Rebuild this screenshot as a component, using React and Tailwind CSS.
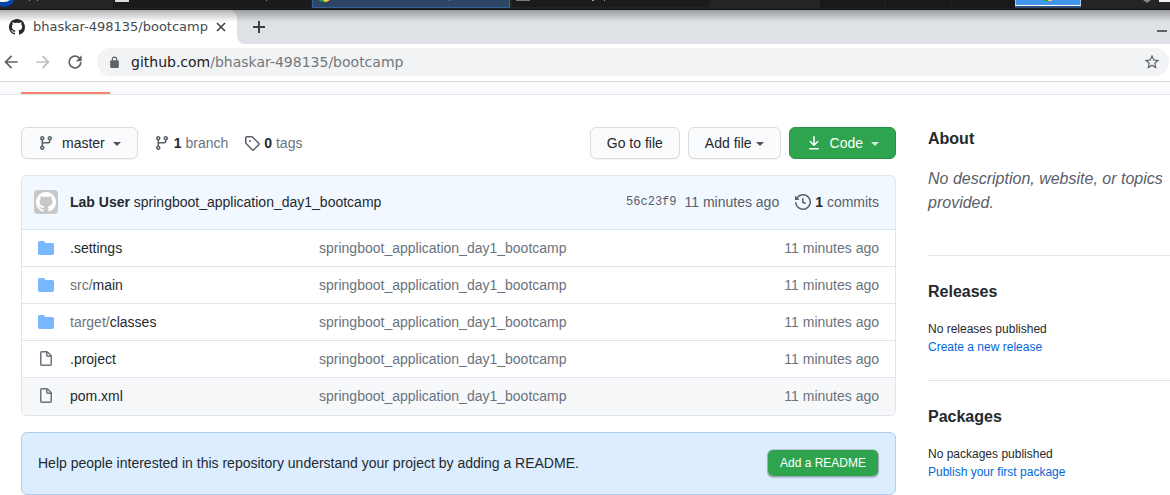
import React from 'react';

const MARK =
  'M8 0C3.58 0 0 3.58 0 8c0 3.54 2.29 6.53 5.47 7.59.4.07.55-.17.55-.38 0-.19-.01-.82-.01-1.49-2.01.37-2.53-.49-2.69-.94-.09-.23-.48-.94-.82-1.13-.28-.15-.68-.52-.01-.53.63-.01 1.08.58 1.23.82.72 1.21 1.87.87 2.33.66.07-.52.28-.87.51-1.07-1.78-.2-3.64-.89-3.64-3.95 0-.87.31-1.59.82-2.15-.08-.2-.36-1.02.08-2.12 0 0 .67-.21 2.2.82.64-.18 1.32-.27 2-.27.68 0 1.36.09 2 .27 1.53-1.04 2.2-.82 2.2-.82.44 1.1.16 1.92.08 2.12.51.56.82 1.27.82 2.15 0 3.07-1.87 3.75-3.65 3.95.29.25.54.73.54 1.48 0 1.07-.01 1.93-.01 2.2 0 .21.15.46.55.38A8.013 8.013 0 0016 8c0-4.42-3.58-8-8-8z';
const BRANCH =
  'M11.75 2.5a.75.75 0 100 1.5.75.75 0 000-1.5zm-2.25.75a2.25 2.25 0 113 2.122V6A2.5 2.5 0 0110 8.5H6a1 1 0 00-1 1v1.128a2.251 2.251 0 11-1.5 0V5.372a2.25 2.25 0 111.5 0v1.836A2.492 2.492 0 016 7h4a1 1 0 001-1v-.628A2.25 2.25 0 019.5 3.25zM4.25 12a.75.75 0 100 1.5.75.75 0 000-1.5zM3.5 3.25a.75.75 0 111.5 0 .75.75 0 01-1.5 0z';
const TAG =
  'M2.5 7.775V2.75a.25.25 0 01.25-.25h5.025a.25.25 0 01.177.073l6.25 6.25a.25.25 0 010 .354l-5.025 5.025a.25.25 0 01-.354 0l-6.25-6.25a.25.25 0 01-.073-.177zm-1.5 0V2.75C1 1.784 1.784 1 2.75 1h5.025c.464 0 .91.184 1.238.513l6.25 6.25a1.75 1.75 0 010 2.474l-5.026 5.026a1.75 1.75 0 01-2.474 0l-6.25-6.25A1.75 1.75 0 011 7.775zM6 5a1 1 0 100 2 1 1 0 000-2z';
const HISTORY =
  'M1.643 3.143L.427 1.927A.25.25 0 000 2.104V5.75c0 .138.112.25.25.25h3.646a.25.25 0 00.177-.427L2.715 4.215a6.5 6.5 0 11-1.18 4.458.75.75 0 10-1.493.154 8.001 8.001 0 101.6-5.684zM7.75 4a.75.75 0 01.75.75v2.992l2.028.812a.75.75 0 01-.557 1.392l-2.5-1A.75.75 0 017 8.25v-3.5A.75.75 0 017.75 4z';
const DOWNLOAD =
  'M7.47 10.78a.75.75 0 001.06 0l3.75-3.75a.75.75 0 00-1.06-1.06L8.75 8.439V1.75a.75.75 0 00-1.5 0v6.689L4.78 5.97a.75.75 0 00-1.06 1.06l3.75 3.75zM3.75 13a.75.75 0 000 1.5h8.5a.75.75 0 000-1.5h-8.5z';
const FOLDER =
  'M1.75 1A1.75 1.75 0 000 2.75v10.5C0 14.216.784 15 1.75 15h12.5A1.75 1.75 0 0016 13.25v-8.5A1.75 1.75 0 0014.25 3h-6.5a.25.25 0 01-.2-.1l-.9-1.2c-.33-.44-.85-.7-1.4-.7h-3.5z';
const FILE =
  'M3.75 1.5a.25.25 0 00-.25.25v11.5c0 .138.112.25.25.25h8.5a.25.25 0 00.25-.25V6H9.75A1.75 1.75 0 018 4.25V1.5H3.75zm5.75.56v2.19c0 .138.112.25.25.25h2.19L9.5 2.06zM2 1.75C2 .784 2.784 0 3.75 0h5.086c.464 0 .909.184 1.237.513l3.414 3.414c.329.328.513.773.513 1.237v8.086A1.75 1.75 0 0112.25 15h-8.5A1.75 1.75 0 012 13.25V1.75z';
const BACK = 'M20 11H7.83l5.59-5.59L12 4l-8 8 8 8 1.41-1.41L7.83 13H20v-2z';
const FORWARD = 'M12 4l-1.41 1.41L16.17 11H4v2h12.17l-5.58 5.59L12 20l8-8z';
const RELOAD =
  'M17.65 6.35A7.96 7.96 0 0012 4a8 8 0 108 8h-2a6 6 0 11-1.76-4.24L13 11h7V4l-2.35 2.35z';
const LOCK =
  'M18 8h-1V6A5 5 0 007 6v2H6a2 2 0 00-2 2v10a2 2 0 002 2h12a2 2 0 002-2V10a2 2 0 00-2-2zM9 6a3 3 0 016 0v2H9V6z';
const STAR =
  'M22 9.24l-7.19-.62L12 2 9.19 8.63 2 9.24l5.46 4.73L5.82 21 12 17.27 18.18 21l-1.63-7.03L22 9.24zM12 15.4l-3.76 2.27 1-4.28-3.32-2.88 4.38-.38L12 6.1l1.71 4.04 4.38.38-3.32 2.88 1 4.28L12 15.4z';

function Icon({ d, box = 16, className = 'size-4' }) {
  return (
    <svg viewBox={`0 0 ${box} ${box}`} fill="currentColor" aria-hidden="true" className={`shrink-0 ${className}`}>
      <path fillRule="evenodd" d={d} />
    </svg>
  );
}

function Caret() {
  return (
    <svg viewBox="0 0 8 5" fill="currentColor" aria-hidden="true" className="h-[5px] w-2 shrink-0 opacity-80">
      <path d="M0 1h8L4 5z" />
    </svg>
  );
}

function Taskbar() {
  return (
    <div className="flex h-[10px] items-start overflow-hidden border-b border-[#111] bg-[#242424]">
      <div className="h-[9px] w-[113px] shrink-0">
        <svg viewBox="0 0 113 9" className="h-[9px] w-[113px]" aria-hidden="true">
          <circle cx="4" cy="-4" r="11" fill="#0546a8" />
          <path d="M0 0h10Q8 2 4 2H0z" fill="#eef3fa" />
          <path d="M29 0h1v1h-1zM37 0h1v1h-1z" fill="#999" />
        </svg>
      </div>
      <div className="h-2 w-[198px] shrink-0 bg-[#1b1b1b]">
        <svg viewBox="0 0 198 8" className="h-2 w-[198px]" aria-hidden="true">
          <path d="M2 0h14v2H2z" fill="#ddd" />
          <path d="M153 0h1v1h-1z" fill="#888" />
        </svg>
      </div>
      <div className="ml-px h-2 w-[198px] shrink-0 border border-t-0 border-[#3263a0] bg-[#2c4663]">
        <svg viewBox="0 0 196 7" className="h-[7px] w-[196px]" aria-hidden="true">
          <path d="M5 0h7v2Q8 2 5 0z" fill="#1da45c" />
          <path d="M11 0h6q-2 2-6 2z" fill="#fbd13c" />
          <path d="M136 0h1v1h-1z" fill="#8090a0" />
        </svg>
      </div>
      <div className="ml-0.5 h-[7px] w-[197px] shrink-0 bg-[#1b1b1b]">
        <svg viewBox="0 0 197 7" className="h-[7px] w-[197px]" aria-hidden="true">
          <path d="M4 0h14v1H4z" fill="#777" />
          <path d="M80 0h2v1h-2zM92 0h1v1h-1z" fill="#999" />
        </svg>
      </div>
      <div className="flex-1" />
      <div className="grid h-2 w-[195px] shrink-0 grid-cols-3 gap-px">
        <div className="bg-[#191919]" />
        <div className="bg-[#191919]" />
        <div className="bg-[#191919]" />
      </div>
      <div className="h-2 w-[66px] shrink-0 border-b-2 border-[#2c4f7c] bg-[#4296ee]">
        <svg viewBox="0 0 66 6" className="h-[6px] w-[66px]" aria-hidden="true">
          <path d="M0 0v6M66 0v6M0 5.5h66" stroke="#fff" fill="none" />
          <path d="M29 0h4v1h-4z" fill="#1da45c" />
          <path d="M33 0h4v1h-4z" fill="#fbd13c" />
        </svg>
      </div>
      <svg viewBox="0 0 89 8" className="h-2 w-[89px] shrink-0" aria-hidden="true">
        <path d="M62 0h8l-4 3z" fill="#888" />
        <path d="M78 0h11v2H78z" fill="#f2f2f2" />
      </svg>
    </div>
  );
}

function Browser() {
  return (
    <header className="font-['DejaVu_Sans',sans-serif]">
      <div className="flex h-[34px] items-stretch bg-[#dee1e6]">
        <div className="flex w-[237px] items-center rounded-tr-lg bg-white pl-[9px] text-[#45494d]">
          <Icon d={MARK} className="size-4 text-[#24292e]" />
          <span className="ml-2 text-[13px] whitespace-nowrap">bhaskar-498135/bootcamp</span>
          <button aria-label="Close tab" className="ml-2 text-[#3c4043]">
            <svg viewBox="0 0 10 10" className="size-[10px]" aria-hidden="true">
              <path d="M1 1l8 8M9 1L1 9" stroke="currentColor" strokeWidth="1.6" />
            </svg>
          </button>
        </div>
        <div className="flex w-10 bg-white">
          <div className="flex flex-1 items-center rounded-bl-lg bg-[#dee1e6] pl-4">
            <button aria-label="New tab" className="text-[#3c4043]">
              <svg viewBox="0 0 12 12" className="size-3" aria-hidden="true">
                <path d="M6 0v12M0 6h12" stroke="currentColor" strokeWidth="2" />
              </svg>
            </button>
          </div>
        </div>
        <button aria-label="Minimize" className="ml-auto flex w-[13px] items-center pt-2 text-[#5f6368]">
          <span className="h-0.5 w-[10px] bg-current" />
        </button>
      </div>
      <div className="flex h-[38px] items-center border-b border-[#dadce0] bg-white pr-px pb-px pl-px text-[#5f6368]">
        <button aria-label="Back">
          <Icon d={BACK} box={24} className="size-5" />
        </button>
        <button aria-label="Forward" className="ml-3 text-[#bdc1c6]">
          <Icon d={FORWARD} box={24} className="size-5" />
        </button>
        <button aria-label="Reload" className="ml-3">
          <Icon d={RELOAD} box={24} className="size-5" />
        </button>
        <div className="ml-3 flex h-7 flex-1 items-center rounded-full bg-[#f1f3f4] pr-2 pl-[11px]">
          <Icon d={LOCK} box={24} className="size-[13px]" />
          <a href="#repo" className="ml-[10px] text-[14px] text-[#73777b]">
            <span className="text-[#202124]">github.com</span>/bhaskar-498135/bootcamp
          </a>
          <button aria-label="Bookmark this page" className="ml-auto">
            <Icon d={STAR} box={24} className="size-[18px]" />
          </button>
        </div>
      </div>
    </header>
  );
}

const MESSAGE = 'springboot_application_day1_bootcamp';
const AGE = '11 minutes ago';
const FILES = [
  { name: '.settings', folder: true },
  { parent: 'src/', name: 'main', folder: true },
  { parent: 'target/', name: 'classes', folder: true },
  { name: '.project' },
  { name: 'pom.xml' },
];

function Toolbar() {
  const plain = 'flex h-8 items-center rounded-md border border-[#d9dcdf] bg-[#fafbfc] px-4 text-[#24292e] shadow-[0_1px_0_rgba(27,31,35,0.04)]';
  return (
    <div className="flex items-center">
      <button className={plain}>
        <Icon d={BRANCH} className="size-4 text-[#586069]" />
        <span className="ml-2 mr-2">master</span>
        <Caret />
      </button>
      <a href="#branches" className="ml-4 flex items-center gap-1 text-[#6a737d]">
        <Icon d={BRANCH} className="size-4 text-[#586069]" />
        <span><strong className="text-[#24292e]">1</strong> branch</span>
      </a>
      <a href="#tags" className="ml-4 flex items-center gap-1 text-[#6a737d]">
        <Icon d={TAG} className="size-4 text-[#586069]" />
        <span><strong className="text-[#24292e]">0</strong> tags</span>
      </a>
      <div className="ml-auto flex gap-2">
        <button className={plain}>Go to file</button>
        <button className={plain}>
          <span className="mr-1">Add file</span>
          <Caret />
        </button>
        <button className="flex h-8 items-center rounded-md border border-[#2a9147] bg-[#2ea44f] px-4 text-white">
          <Icon d={DOWNLOAD} />
          <span className="mx-2">Code</span>
          <Caret />
        </button>
      </div>
    </div>
  );
}

function FileBox() {
  return (
    <section className="mt-4 overflow-hidden rounded-md border border-[#e1e4e8]">
      <div className="-mx-px -mt-px flex h-[55px] items-center rounded-t-md border border-[#c8e1ff] border-b-[#d8e4f0] bg-[#f1f8ff] pr-4 pb-px pl-3 text-[#586069]">
        <span className="flex size-6 items-center justify-center rounded bg-[#c8c8c8] text-white">
          <Icon d={MARK} className="size-5" />
        </span>
        <span className="ml-3 text-[#24292e]">
          <strong>Lab User</strong> {MESSAGE}
        </span>
        <a href="#commit" className="ml-auto font-['Liberation_Mono',monospace] text-xs">56c23f9</a>
        <span className="ml-2">{AGE}</span>
        <a href="#commits" className="ml-4 flex items-center gap-1">
          <Icon d={HISTORY} />
          <span><strong className="text-[#24292e]">1</strong> commits</span>
        </a>
      </div>
      <table className="w-full table-fixed border-separate border-spacing-0">
        <colgroup>
          <col className="w-12" />
          <col className="w-[249px]" />
          <col />
          <col className="w-[140px]" />
        </colgroup>
        <tbody>
          {FILES.map((file) => (
            <tr
              key={file.name}
              className="h-[37px] text-[#6a737d] last:bg-[#f6f8fa] *:border-b *:border-[#e1e4e8] last:*:border-transparent"
            >
              <td className="pl-4">
                <Icon
                  d={file.folder ? FOLDER : FILE}
                  className={file.folder ? 'size-4 text-[#79b8ff]' : 'size-4 text-[#6a737d]'}
                />
              </td>
              <td>
                <a href={`#${file.name}`}>
                  {file.parent}
                  <span className="text-[#24292e]">{file.name}</span>
                </a>
              </td>
              <td>{MESSAGE}</td>
              <td className="pr-4 text-right">{AGE}</td>
            </tr>
          ))}
        </tbody>
      </table>
    </section>
  );
}

function Sidebar() {
  return (
    <aside className="w-[242px] shrink-0 text-xs leading-[18px] text-[#24292e]">
      <section className="border-b border-[#e1e4e8] pb-10">
        <h2 className="mb-4 text-base leading-6 font-bold">About</h2>
        <p className="text-base leading-6 text-[#586069] italic">No description, website, or topics provided.</p>
      </section>
      <section className="border-b border-[#e1e4e8] py-6">
        <h2 className="mb-4 text-base leading-6 font-bold">Releases</h2>
        <p>No releases published</p>
        <a href="#release" className="block text-[#0366d6]">Create a new release</a>
      </section>
      <section className="pt-6">
        <h2 className="mb-4 text-base leading-6 font-bold">Packages</h2>
        <p>No packages published</p>
        <a href="#package" className="block text-[#0366d6]">Publish your first package</a>
      </section>
    </aside>
  );
}

export default function App() {
  return (
    <div className="bg-white font-['Liberation_Sans',Arial,sans-serif] text-sm leading-5">
      <Taskbar />
      <div className="relative">
        <Browser />
        <div className="pointer-events-none absolute inset-x-0 top-0 h-3 bg-linear-to-b from-black/30 to-transparent" />
      </div>
      <nav aria-label="Repository" className="flex h-[13px] items-end border-b border-[#e1e4e8] bg-[#fafbfc] pl-[21px]">
        <a href="#code" aria-label="Code" className="h-0.5 w-[89px] bg-[#f9826c]" />
      </nav>
      <div className="flex gap-8 pt-8 pl-[21px]">
        <main className="min-w-0 flex-1">
          <Toolbar />
          <FileBox />
          <section className="mt-4 flex h-[63px] items-center justify-between rounded-md border border-[#afcdec] bg-[#dbedff] px-4 pb-px text-[#24292e]">
            <p>Help people interested in this repository understand your project by adding a README.</p>
            <button className="h-7 rounded-md border border-[#1b1f23]/15 bg-[#2ea44f] bg-clip-padding px-3 text-xs text-white shadow-[0_1px_1px_rgba(27,31,35,0.2)]">
              Add a README
            </button>
          </section>
        </main>
        <Sidebar />
      </div>
    </div>
  );
}
